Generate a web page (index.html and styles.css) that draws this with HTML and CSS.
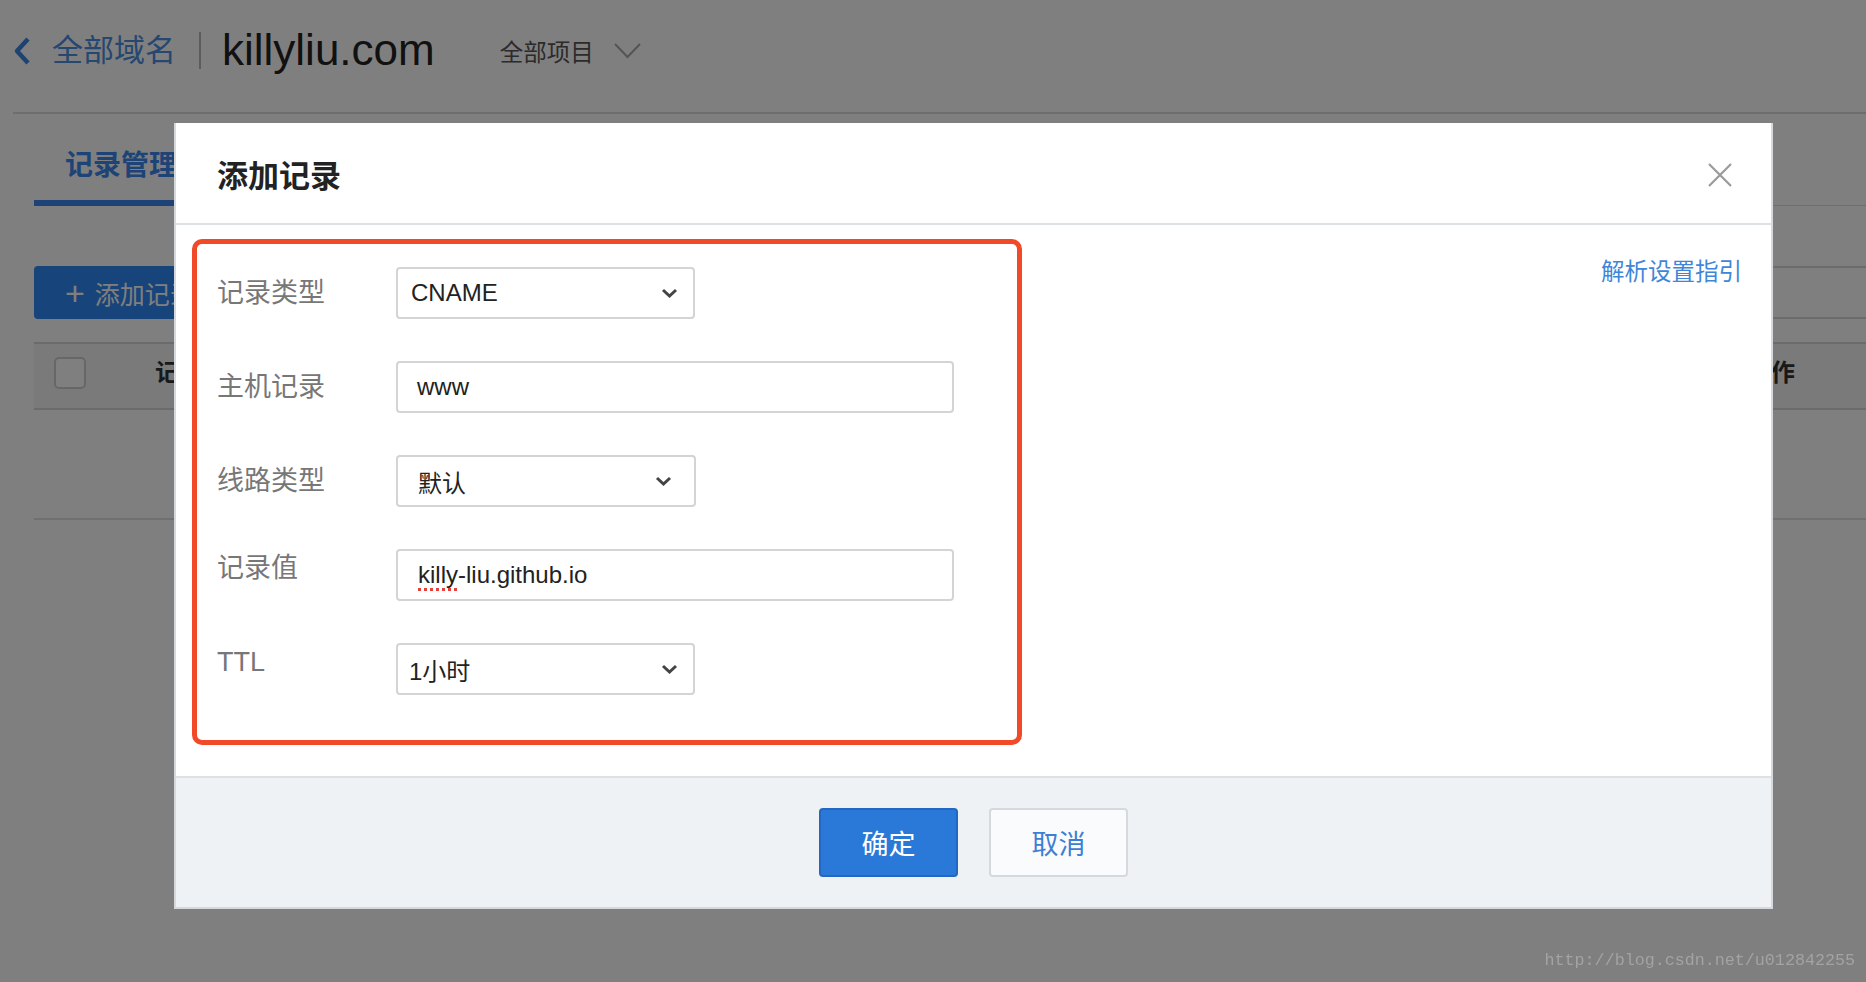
FILE: index.html
```html
<!DOCTYPE html>
<html lang="zh-CN">
<head>
<meta charset="utf-8">
<title>添加记录</title>
<link rel="stylesheet" href="styles.css">
</head>
<body>
<div class="page">
  <header class="topbar">
    <a class="back">
      <svg class="back-icon" width="18" height="28" viewBox="0 0 18 28"><polyline points="15,2 4,14 15,26" fill="none" stroke="#3d86e0" stroke-width="4.5" stroke-linejoin="round"/></svg>
      <span>全部域名</span>
    </a>
    <span class="sep"></span>
    <h1 class="domain">killyliu.com</h1>
    <div class="project">
      <span>全部项目</span>
      <svg width="27" height="16" viewBox="0 0 27 16"><polyline points="1,1 13.5,14 26,1" fill="none" stroke="#a8a8a8" stroke-width="2"/></svg>
    </div>
  </header>
  <main class="main">
    <nav class="tabs">
      <div class="tab tab--active">记录管理</div>
    </nav>
    <div class="toolbar">
      <button class="add-btn"><span class="plus">+</span><span class="add-text">添加记录</span></button>
      <div class="search"></div>
    </div>
    <div class="table">
      <div class="thead">
        <span class="checkbox"></span>
        <span class="th th--type">记录类型</span>
        <span class="th th--ops">操作</span>
      </div>
      <div class="trow"></div>
    </div>
  </main>
</div>

<div class="overlay"></div>

<div class="modal">
  <div class="modal-header">
    <h2 class="modal-title">添加记录</h2>
    <svg class="close" width="26" height="26" viewBox="0 0 26 26"><path d="M2 2 L24 24 M24 2 L2 24" stroke="#9a9a9a" stroke-width="2.2" fill="none"/></svg>
  </div>
  <div class="modal-body">
    <div class="form-box">
      <div class="form-row">
        <label class="label">记录类型</label>
        <div class="control control--select sel-1">
          <span>CNAME</span>
          <svg class="chev" width="17" height="10" viewBox="0 0 17 10"><polyline points="2,2 8.5,8 15,2" fill="none" stroke="#444" stroke-width="3"/></svg>
        </div>
      </div>
      <div class="form-row">
        <label class="label">主机记录</label>
        <div class="control control--input inp-2"><span>www</span></div>
      </div>
      <div class="form-row">
        <label class="label">线路类型</label>
        <div class="control control--select sel-3">
          <span>默认</span>
          <svg class="chev" width="17" height="10" viewBox="0 0 17 10"><polyline points="2,2 8.5,8 15,2" fill="none" stroke="#444" stroke-width="3"/></svg>
        </div>
      </div>
      <div class="form-row">
        <label class="label label--top">记录值</label>
        <div class="control control--input inp-4"><span><span class="spell">killy</span>-liu.github.io</span></div>
      </div>
      <div class="form-row">
        <label class="label label--top">TTL</label>
        <div class="control control--select sel-5">
          <span>1小时</span>
          <svg class="chev" width="17" height="10" viewBox="0 0 17 10"><polyline points="2,2 8.5,8 15,2" fill="none" stroke="#444" stroke-width="3"/></svg>
        </div>
      </div>
    </div>
    <a class="guide">解析设置指引</a>
  </div>
  <div class="modal-footer">
    <button class="btn btn--primary">确定</button>
    <button class="btn btn--default">取消</button>
  </div>
</div>

<div class="watermark">http://blog.csdn.net/u012842255</div>
</body>
</html>
```

FILE: styles.css
```css
* { box-sizing: border-box; }

html, body {
  margin: 0;
  padding: 0;
  width: 1866px;
  height: 982px;
  overflow: hidden;
  background: #ffffff;
  font-family: "Liberation Sans", "Noto Sans CJK SC", sans-serif;
  color: #222;
}

.page {
  width: 1866px;
  height: 982px;
}

/* ---------- top bar ---------- */
.topbar {
  margin-left: 13px;
  height: 114px;
  padding-bottom: 11px;
  display: flex;
  align-items: center;
  border-bottom: 2px solid #dcdcdc;
}

.back {
  display: flex;
  align-items: center;
  color: #4a8fe0;
  font-size: 31px;
  line-height: 40px;
}

.back-icon { margin-right: 21px; }

.sep {
  width: 2px;
  height: 37px;
  background: #b8b8b8;
  margin: 0 21px 0 23px;
}

.domain {
  margin: 0;
  font-weight: 400;
  font-size: 44px;
  line-height: 50px;
  color: #222;
  position: relative;
  top: -1px;
}

.project {
  display: flex;
  align-items: center;
  margin-left: 65px;
  font-size: 23.5px;
  color: #565656;
}

.project svg { margin-left: 20px; }

/* ---------- main ---------- */
.main { padding-left: 34px; }

.tabs {
  display: flex;
  height: 92px;
  border-bottom: 1px solid #dcdcdc;
}

.tab {
  height: 92px;
  padding: 34px 31px 0 31px;
  line-height: 36px;
  font-size: 28px;
  font-weight: 700;
}

.tab--active {
  color: #3a86ee;
  border-bottom: 6px solid #3a86ee;
}

.toolbar {
  margin-top: 60px;
  display: flex;
  justify-content: space-between;
  align-items: center;
}

.add-btn {
  height: 53px;
  width: 190px;
  padding: 0 0 0 31px;
  border: 0;
  border-radius: 4px;
  background: #2e88f4;
  color: #fff;
  font-family: inherit;
  font-size: 25px;
  display: flex;
  align-items: center;
  overflow: hidden;
  white-space: nowrap;
}

.plus {
  font-size: 34px;
  font-weight: 300;
  margin-right: 10px;
  line-height: 1;
}

.search {
  width: 380px;
  height: 53px;
  border: 2px solid #d8d8d8;
  margin-right: -60px;
}

.table { margin-top: 23px; }

.thead {
  height: 68px;
  display: flex;
  align-items: center;
  background: #f4f5f7;
  border-top: 2px solid #d6d6d6;
  border-bottom: 2px solid #d6d6d6;
  padding-bottom: 6px;
}

.checkbox {
  width: 32px;
  height: 32px;
  margin-left: 20px;
  border: 2px solid #cfcfcf;
  border-radius: 5px;
  background: #fff;
}

.th {
  font-size: 24px;
  line-height: 30px;
  font-weight: 700;
  color: #333;
}

.th--type { margin-left: 69px; }

.th--ops { margin-left: auto; margin-right: 71px; }

.trow {
  height: 110px;
  border-bottom: 2px solid #e0e0e0;
}

/* ---------- overlay & modal ---------- */
.overlay {
  position: fixed;
  inset: 0;
  background: rgba(0, 0, 0, 0.5);
}

.modal {
  position: absolute;
  left: 174px;
  top: 123px;
  width: 1599px;
  background: #fff;
  border: 2px solid #d6d9dc;
  border-top: 0;
}

.modal-header {
  height: 102px;
  padding: 0 38px 0 41px;
  display: flex;
  align-items: center;
  justify-content: space-between;
  border-bottom: 2px solid #dde1e4;
}

.modal-title {
  margin: 0;
  font-size: 31px;
  font-weight: 700;
  color: #222;
}

.close { position: relative; top: 2px; }

.modal-body {
  display: flex;
  justify-content: space-between;
  align-items: flex-start;
  padding: 14px 29px 31px 16px;
}

.form-box {
  width: 830px;
  border: 5px solid #f04a28;
  border-radius: 10px;
  padding: 23px 0 45px 20px;
  display: flex;
  flex-direction: column;
  gap: 42px;
}

.form-row {
  display: flex;
  align-items: center;
  height: 52px;
}

.label {
  width: 179px;
  font-size: 27px;
  line-height: 36px;
  color: #777;
}

.label--top {
  align-self: flex-start;
  margin-top: 1px;
}

.control {
  height: 52px;
  border: 2px solid #d4d4d4;
  border-radius: 4px;
  display: flex;
  align-items: center;
  font-size: 24px;
  color: #222;
  background: #fff;
}

.control--select { justify-content: space-between; }

.sel-1 { width: 299px; padding: 0 15px 0 13px; }
.sel-3 { width: 300px; padding: 0 22px 0 20px; }
.sel-5 { width: 299px; padding: 0 15px 0 11px; }

.control--input { width: 558px; }
.inp-2 { padding-left: 19px; }
.inp-4 { padding-left: 20px; }

.spell {
  text-decoration: underline dotted #e5403a;
  text-decoration-thickness: 3px;
  text-underline-offset: 5px;
}

.guide {
  margin-top: 18px;
  font-size: 23.5px;
  line-height: 30px;
  color: #3f86d9;
}

.modal-footer {
  background: #eff2f5;
  border-top: 2px solid #dde1e5;
  padding: 30px 0;
  display: flex;
  justify-content: center;
  gap: 31px;
}

.btn {
  width: 139px;
  height: 69px;
  border-radius: 4px;
  font-family: inherit;
  font-size: 27px;
}

.btn--primary {
  background: #2a79d9;
  border: 2px solid #2268c2;
  color: #fff;
}

.btn--default {
  background: #fafbfc;
  border: 2px solid #d5d9dd;
  color: #3d7fd2;
}

.watermark {
  position: absolute;
  right: 11px;
  bottom: 12px;
  font-family: "Liberation Mono", "DejaVu Sans Mono", monospace;
  font-size: 16.7px;
  color: #a3a3a3;
}
```
